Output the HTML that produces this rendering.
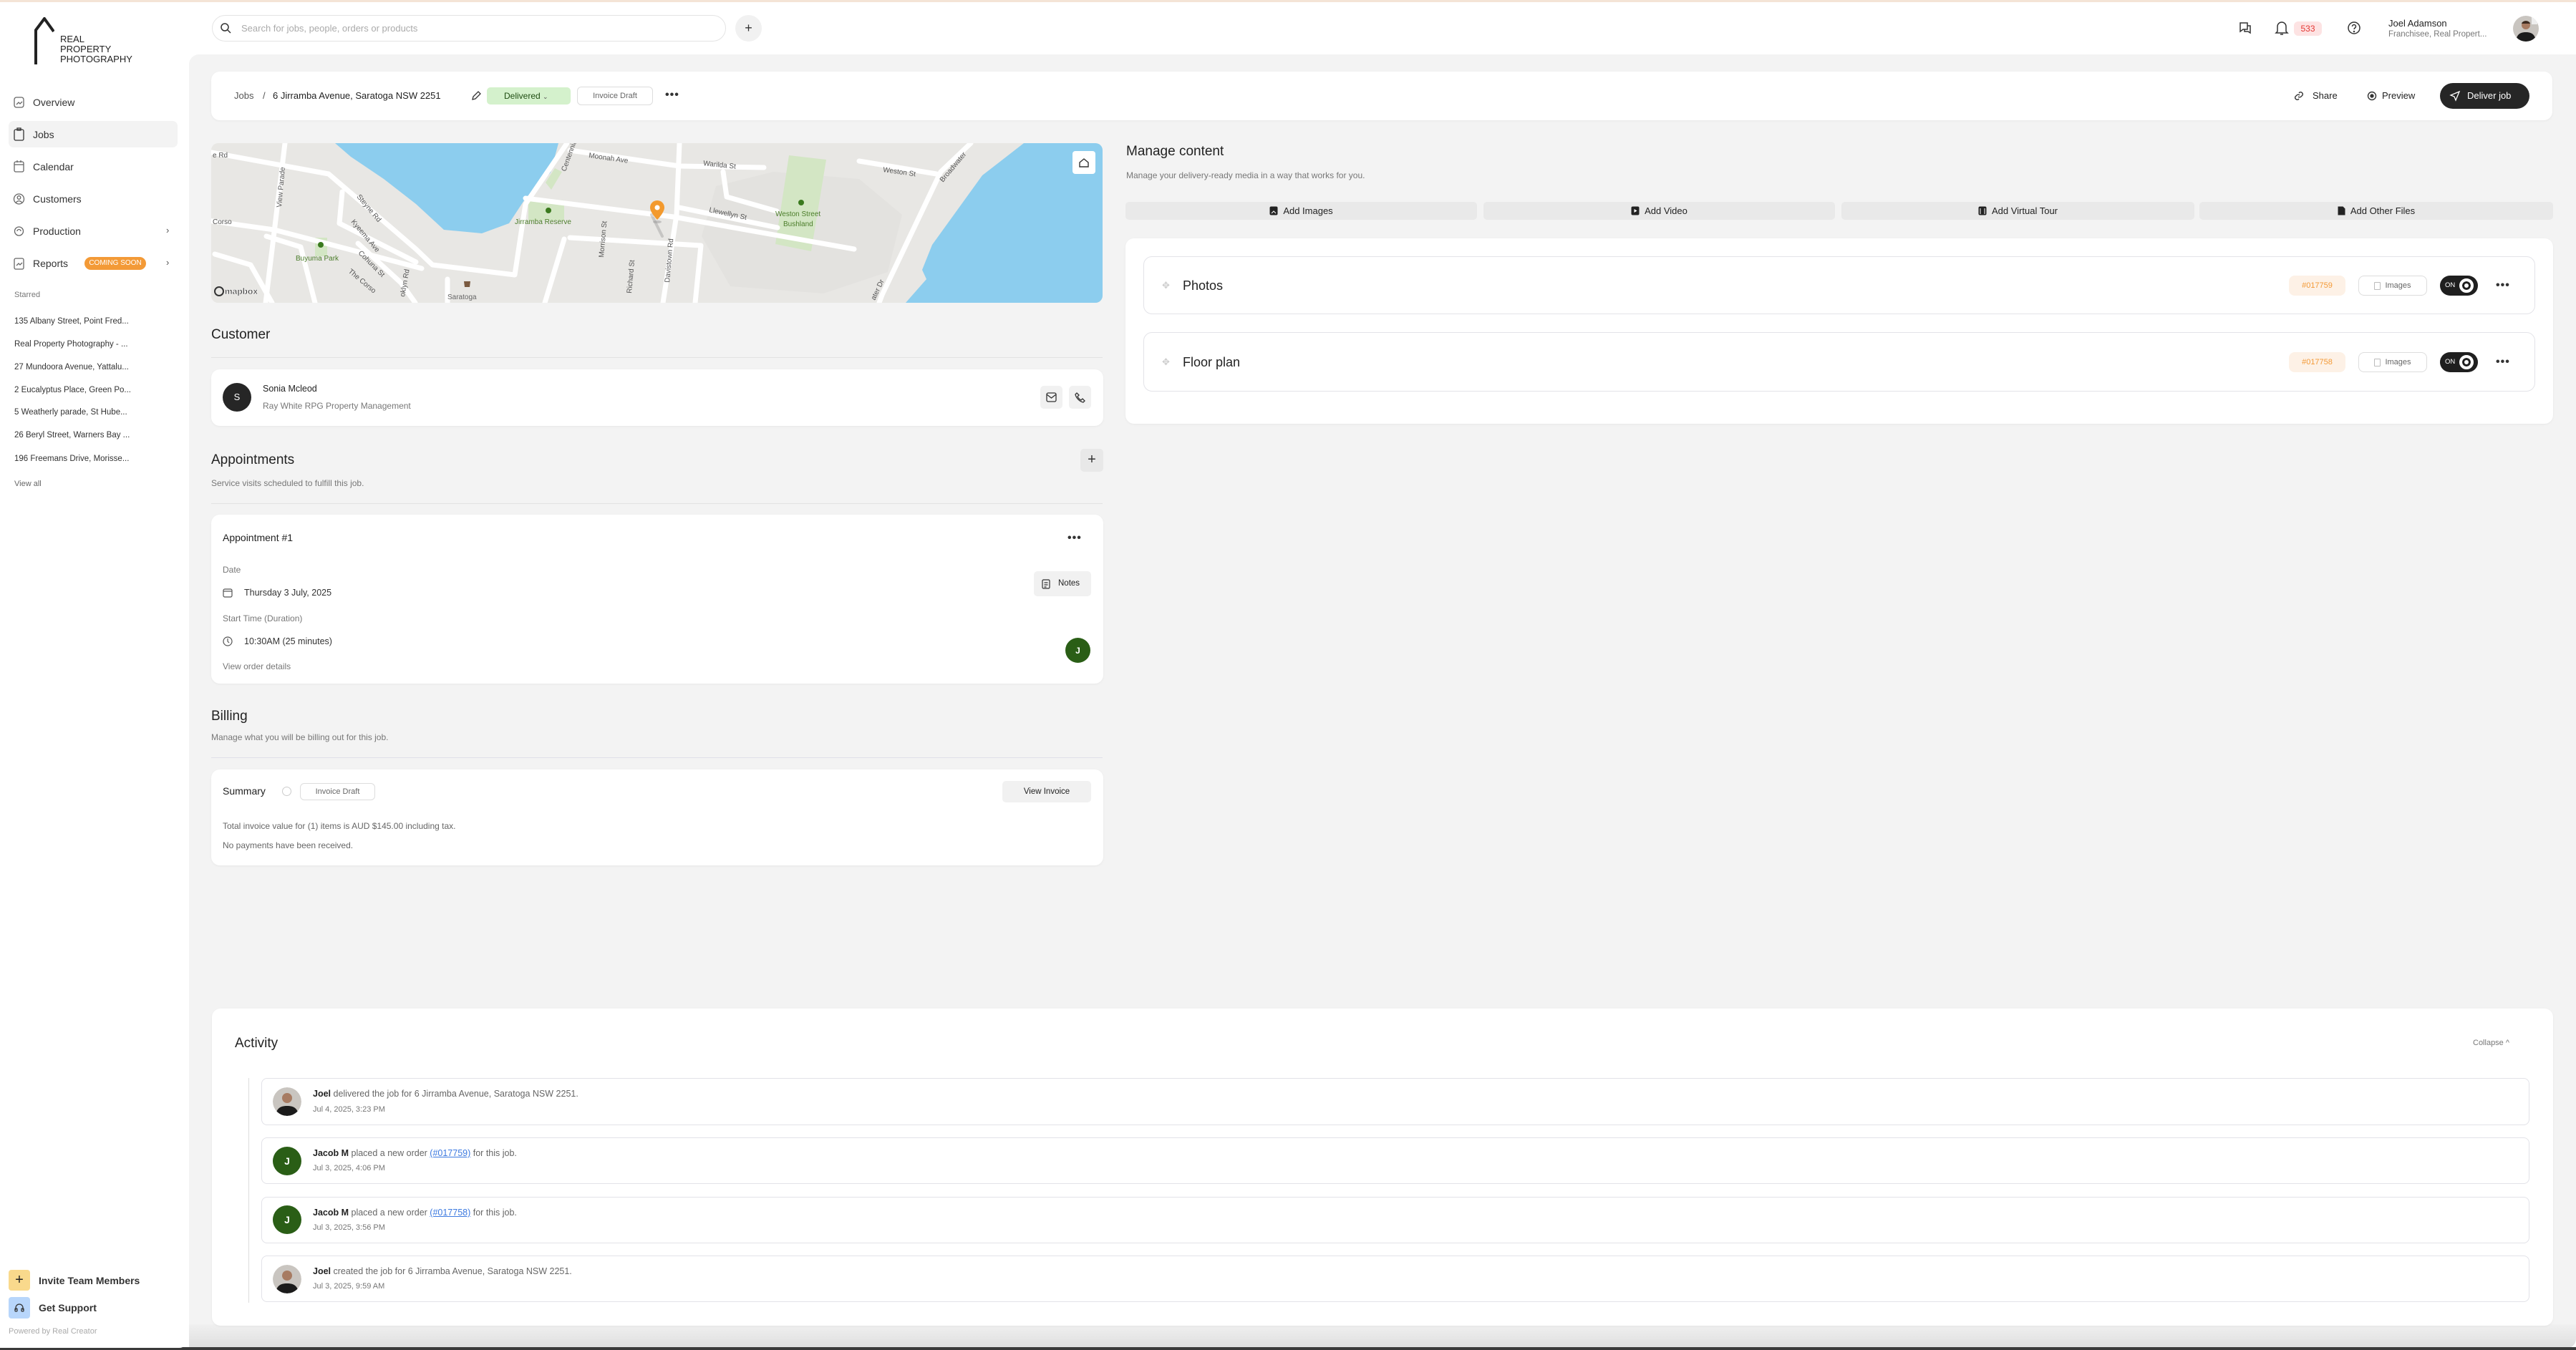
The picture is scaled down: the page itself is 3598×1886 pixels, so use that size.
<!DOCTYPE html>
<html><head><meta charset="utf-8">
<style>
*{box-sizing:border-box;margin:0;padding:0}
body{width:3598px;height:1886px;position:relative;overflow:hidden;background:#fff;font-family:"Liberation Sans",Arial,sans-serif;color:#1f1f1f}
.a{position:absolute}
.t{position:absolute;white-space:nowrap;line-height:1}
.card{position:absolute;background:#fff;border-radius:12px;box-shadow:0 1px 3px rgba(0,0,0,.05)}
.gray{color:#777}
.nav{position:absolute;left:46px;font-size:14px;color:#333;transform:translateY(-50%)}
.star{position:absolute;left:20px;font-size:11.5px;color:#333;transform:translateY(-50%)}
.ic{position:absolute;width:14px;height:14px;border:1.5px solid #666;border-radius:3px}
.btn{position:absolute;background:#e9e9e9;border-radius:5px;font-size:13px;color:#222;display:flex;align-items:center;justify-content:center;gap:7px}
.pill{position:absolute;border:1px solid #ddd;border-radius:6px;font-size:11px;color:#666;display:flex;align-items:center;justify-content:center}
.row{position:absolute;left:1597px;width:1944px;height:81px;border:1.5px solid #e3e3e8;border-radius:12px;background:#fff}
.act{position:absolute;left:365px;width:3168px;border:1.5px solid #e2e2e8;border-radius:8px;background:#fff}
.av{position:absolute;width:40px;height:40px;border-radius:50%}
.jav{background:#2a5e16;color:#fff;font-size:14px;font-weight:bold;display:flex;align-items:center;justify-content:center}
.dots{position:absolute;font-size:16px;letter-spacing:1px;color:#333;font-weight:bold}
</style></head><body>
<!-- top line -->
<div class="a" style="left:0;top:0;width:3598px;height:3px;background:#f4e4d6"></div>
<!-- main gray -->
<div class="a" style="left:264px;top:76px;width:3334px;height:1808px;background:#f3f3f3;border-radius:14px 0 14px 0"></div>
<div class="a" style="left:264px;top:1850px;width:3334px;height:34px;background:linear-gradient(#f0f0f0,#dedede);border-radius:0 0 14px 0"></div>
<div class="a" style="left:0;top:1882px;width:3598px;height:4px;background:#3a3a3a"></div>
<div class="a" style="left:0;top:1740px;width:264px;height:143px;background:#fff;border-radius:0 0 14px 0"></div>

<!-- logo -->
<svg class="a" style="left:46px;top:24px" width="30" height="66" viewBox="0 0 30 66"><path d="M4 66 V18 L16 2 L29 20" fill="none" stroke="#222" stroke-width="4"/></svg>
<div class="t" style="left:84px;top:48px;font-size:13px;line-height:14px;color:#222;white-space:normal;width:120px">REAL<br>PROPERTY<br>PHOTOGRAPHY</div>

<!-- search -->
<div class="a" style="left:296px;top:21px;width:718px;height:37px;border:1.5px solid #e4e4e4;border-radius:19px"></div>
<svg class="a" style="left:307px;top:31px" width="16" height="16" viewBox="0 0 16 16"><circle cx="7" cy="7" r="5" fill="none" stroke="#333" stroke-width="1.5"/><path d="M11 11l4 4" stroke="#333" stroke-width="1.5"/></svg>
<div class="t" style="left:337px;top:33px;font-size:13px;color:#aaa">Search for jobs, people, orders or products</div>
<div class="a" style="left:1027px;top:21px;width:37px;height:37px;border-radius:50%;background:#f1f1f1;font-size:18px;text-align:center;line-height:36px;color:#333">+</div>

<!-- header right -->
<svg class="a" style="left:3126px;top:29px" width="20" height="20" viewBox="0 0 20 20" fill="none" stroke="#333" stroke-width="1.5"><path d="M3 3h10v9H7l-4 3z"/><path d="M13 7h4v10l-3-2h-5v-3"/></svg>
<svg class="a" style="left:3177px;top:28px" width="20" height="22" viewBox="0 0 20 22" fill="none" stroke="#333" stroke-width="1.5"><path d="M4 16V9a6 6 0 0112 0v7l2 2H2z"/><path d="M8 20h4"/></svg>
<div class="a" style="left:3204px;top:30px;width:39px;height:20px;border-radius:6px;background:#fde3e3;color:#e53935;font-size:12px;text-align:center;line-height:20px">533</div>
<svg class="a" style="left:3278px;top:29px" width="20" height="20" viewBox="0 0 20 20" fill="none" stroke="#333" stroke-width="1.5"><circle cx="10" cy="10" r="8"/><path d="M7.5 8a2.5 2.5 0 015 0c0 2-2.5 2-2.5 4"/><circle cx="10" cy="15" r=".5"/></svg>
<div class="t" style="left:3336px;top:26px;font-size:13px;color:#222">Joel Adamson</div>
<div class="t" style="left:3336px;top:43px;font-size:11.5px;color:#777">Franchisee, Real Propert...</div>
<svg class="a" style="left:3510px;top:22px" width="36" height="36" viewBox="0 0 36 36"><defs><clipPath id="c1"><circle cx="18" cy="18" r="18"/></clipPath></defs><g clip-path="url(#c1)"><rect width="36" height="36" fill="#c9c5c0"/><rect x="26" y="2" width="8" height="10" fill="#eee"/><path d="M4 36c1-10 6-13 14-13s13 3 14 13z" fill="#1b1b1b"/><circle cx="18" cy="13" r="6" fill="#a77b62"/><path d="M12 11c1-5 11-5 12 0" fill="#3b2a20"/></g></svg>

<!-- sidebar nav -->
<div class="a" style="left:12px;top:169px;width:236px;height:37px;background:#f3f3f3;border-radius:7px"></div>
<svg class="a" style="left:0;top:0" width="40" height="400" fill="none" stroke="#666" stroke-width="1.3">
<rect x="20" y="136" width="13" height="14" rx="3"/><path d="M23 146l3-3 2 2 3-3"/>
<rect x="20" y="181" width="13" height="15" rx="2" stroke="#333"/><path d="M24 179h5v3h-5z" stroke="#333"/>
<rect x="20" y="226" width="13" height="14" rx="2"/><path d="M20 230h13M24 224v3M29 224v3"/>
<circle cx="26.5" cy="278" r="7"/><circle cx="26.5" cy="276" r="2.3"/><path d="M22.5 283c2-3 6-3 8 0"/>
<circle cx="26.5" cy="323" r="6"/><path d="M24 323a2.5 2.5 0 015 0"/>
<rect x="20" y="361" width="13" height="15" rx="2"/><path d="M23 371l3-3 2 2 3-3"/>
</svg>
<div class="nav" style="top:143px">Overview</div>
<div class="nav" style="top:188px">Jobs</div>
<div class="nav" style="top:233px">Calendar</div>
<div class="nav" style="top:278px">Customers</div>
<div class="nav" style="top:323px">Production</div>
<div class="nav" style="top:368px">Reports</div>
<div class="t" style="left:118px;top:359px;width:86px;height:18px;border-radius:9px;background:#f39a37;color:#fff;font-size:10px;line-height:18px;text-align:center">COMING SOON</div>
<div class="t" style="left:232px;top:315px;font-size:13px;color:#555">›</div>
<div class="t" style="left:232px;top:360px;font-size:13px;color:#555">›</div>
<div class="star" style="top:412px;color:#777;font-size:11px">Starred</div>
<div class="star" style="top:449px">135 Albany Street, Point Fred...</div>
<div class="star" style="top:481px">Real Property Photography - ...</div>
<div class="star" style="top:513px">27 Mundoora Avenue, Yattalu...</div>
<div class="star" style="top:545px">2 Eucalyptus Place, Green Po...</div>
<div class="star" style="top:576px">5 Weatherly parade, St Hube...</div>
<div class="star" style="top:608px">26 Beryl Street, Warners Bay ...</div>
<div class="star" style="top:641px">196 Freemans Drive, Morisse...</div>
<div class="star" style="top:676px;color:#666;font-size:11px">View all</div>

<!-- sidebar bottom -->
<div class="a" style="left:12px;top:1774px;width:30px;height:29px;border-radius:4px;background:#f9d98c;text-align:center;line-height:29px;font-size:20px;color:#222">+</div>
<div class="t" style="left:54px;top:1782px;font-size:14px;font-weight:bold;color:#333">Invite Team Members</div>
<div class="a" style="left:12px;top:1812px;width:30px;height:30px;border-radius:4px;background:#b8d6fb"></div>
<svg class="a" style="left:19px;top:1819px" width="16" height="16" viewBox="0 0 16 16" fill="none" stroke="#333" stroke-width="1.3"><path d="M3 11V8a5 5 0 0110 0v3"/><rect x="2" y="9" width="3" height="4" rx="1"/><rect x="11" y="9" width="3" height="4" rx="1"/></svg>
<div class="t" style="left:54px;top:1820px;font-size:14px;font-weight:bold;color:#333">Get Support</div>
<div class="t" style="left:12px;top:1855px;font-size:11px;color:#aaa">Powered by Real Creator</div>

<!-- top job card -->
<div class="card" style="left:295px;top:100px;width:3270px;height:68px"></div>
<div class="t" style="left:327px;top:127px;font-size:13px;color:#555">Jobs</div>
<div class="t" style="left:367px;top:127px;font-size:13px;color:#555">/</div>
<div class="t" style="left:381px;top:127px;font-size:13px;color:#222">6 Jirramba Avenue, Saratoga NSW 2251</div>
<svg class="a" style="left:657px;top:126px" width="16" height="16" viewBox="0 0 16 16" fill="none" stroke="#333" stroke-width="1.3"><path d="M3 13l1-4 7-7 3 3-7 7z"/></svg>
<div class="a" style="left:680px;top:122px;width:117px;height:24px;border-radius:5px;background:#d4f1cc;font-size:12px;color:#1f4d12;line-height:24px;padding-left:24px">Delivered <span style="font-size:9px;color:#555">⌄</span></div>
<div class="pill" style="left:806px;top:121px;width:106px;height:26px">Invoice Draft</div>
<div class="dots" style="left:929px;top:124px">•••</div>
<svg class="a" style="left:3203px;top:126px" width="16" height="16" viewBox="0 0 16 16" fill="none" stroke="#333" stroke-width="1.4"><path d="M7 9a3 3 0 004 0l2-2a3 3 0 00-4-4l-1 1M9 7a3 3 0 00-4 0L3 9a3 3 0 004 4l1-1"/></svg>
<div class="t" style="left:3230px;top:127px;font-size:13px;color:#222">Share</div>
<svg class="a" style="left:3306px;top:127px" width="14" height="14" viewBox="0 0 14 14" fill="none" stroke="#333" stroke-width="1.4"><circle cx="7" cy="7" r="5.5"/><circle cx="7" cy="7" r="2" fill="#333"/></svg>
<div class="t" style="left:3327px;top:127px;font-size:13px;color:#222">Preview</div>
<div class="a" style="left:3408px;top:116px;width:125px;height:36px;border-radius:18px;background:#262626;color:#fff;font-size:13px;line-height:36px;padding-left:38px">Deliver job</div>
<svg class="a" style="left:3421px;top:126px" width="16" height="16" viewBox="0 0 16 16" fill="none" stroke="#fff" stroke-width="1.3"><path d="M14 2L2 7l5 2 2 5z"/></svg>

<!-- map -->
<div class="a" style="left:295px;top:200px;width:1245px;height:223px;border-radius:10px;overflow:hidden;background:#e8e7e4">
<svg width="1245" height="223" viewBox="295 200 1245 223">
<rect x="295" y="200" width="1245" height="223" fill="#e8e7e4"/>
<path d="M1000 260 L1080 240 L1200 250 L1260 300 L1240 380 L1150 410 L1020 400 L980 330Z" fill="#e3e2df"/>
<path d="M468 200 L780 200 L769 241 L734 277 L711 312 L673 326 L620 321 L581 285 L536 250 L490 219Z" fill="#8ccdee"/>
<path d="M1430 200 L1540 200 L1540 423 L1265 423 L1294 390 L1288 377 L1302 342 L1372 245Z" fill="#8ccdee"/>
<path d="M1102 217 L1154 223 L1133 351 L1083 341Z" fill="#d3e6c4"/>
<path d="M738 277 L788 280 L788 308 L738 308Z" fill="#d3e6c4"/>
<path d="M762 255 L775 235 L785 240 L770 265Z" fill="#d3e6c4"/>
<path d="M440 332 L457 332 L457 358 L440 358Z" fill="#d3e6c4"/>
<g fill="none" stroke="#fff" stroke-width="7" stroke-linecap="round" stroke-linejoin="round">
<path d="M290 212 L459 243 L581 348 L604 370 L719 384 L734 285 L792 200"/>
<path d="M734 277 L941 303 L1193 348"/>
<path d="M949 200 L945 300 L926 423"/>
<path d="M796 210 L949 232 L1067 234"/>
<path d="M398 200 L371 423"/>
<path d="M290 308 L383 321 L589 375"/>
<path d="M478 268 L474 312 L581 366"/>
<path d="M796 332 L979 343 L971 423"/>
<path d="M788 334 L761 423"/>
<path d="M1356 200 L1314 240 L1232 412 L1228 423"/>
<path d="M1200 225 L1308 243"/>
<path d="M949 290 L1086 318"/>
<path d="M1010 240 L1015 275 L1085 295"/>
<path d="M625 390 L625 423" />
<path d="M372 330 L420 345 L440 423"/>
<path d="M300 355 L350 370 L380 423"/>
<path d="M500 340 L560 395 L580 423"/>
</g>
<path d="M910 300 L925 330" stroke="#888" stroke-width="4" stroke-linecap="round" opacity=".35"/>
<g font-family="Liberation Sans,sans-serif" font-size="10" fill="#555">
<text x="297" y="220">e Rd</text>
<text x="297" y="313">Corso</text>
<text x="822" y="220" transform="rotate(8 822 220)">Moonah Ave</text>
<text x="982" y="231" transform="rotate(6 982 231)">Warilda St</text>
<text x="1233" y="240" transform="rotate(8 1233 240)">Weston St</text>
<text x="990" y="296" transform="rotate(12 990 296)">Llewellyn St</text>
<text x="498" y="275" transform="rotate(50 498 275)">Steyne Rd</text>
<text x="490" y="310" transform="rotate(50 490 310)">Kyeema Ave</text>
<text x="500" y="354" transform="rotate(45 500 354)">Cohuna St</text>
<text x="486" y="380" transform="rotate(40 486 380)">The Corso</text>
<text x="393" y="290" transform="rotate(-85 393 290)">View Parade</text>
<text x="843" y="360" transform="rotate(-85 843 360)">Morrison St</text>
<text x="882" y="410" transform="rotate(-85 882 410)">Richard St</text>
<text x="935" y="395" transform="rotate(-85 935 395)">Davistown Rd</text>
<text x="790" y="240" transform="rotate(-70 790 240)">Centennial</text>
<text x="1317" y="255" transform="rotate(-50 1317 255)">Broadwater</text>
<text x="1222" y="420" transform="rotate(-65 1222 420)">ater Dr</text>
<text x="565" y="415" transform="rotate(-80 565 415)">oklyn Rd</text>
</g>
<g font-family="Liberation Sans,sans-serif" font-size="10" fill="#4b7d2a">
<text x="719" y="313">Jirramba Reserve</text><text x="413" y="364">Buyuma Park</text>
<text x="1083" y="302">Weston Street</text><text x="1094" y="316">Bushland</text>
</g>
<text x="625" y="418" font-family="Liberation Sans,sans-serif" font-size="10" fill="#666">Saratoga</text>
<g fill="#3a7a1e"><circle cx="766" cy="294" r="4"/><circle cx="448" cy="342" r="4"/><circle cx="1119" cy="283" r="4"/></g>
<path d="M648 393h9l-1 8h-7z" fill="#7a5a40"/>
<path d="M918 280 a10 10 0 0 1 10 10 c0 7-10 17-10 17 s-10-10-10-17 a10 10 0 0 1 10-10z" fill="#f39a2e"/>
<circle cx="918" cy="290" r="3.5" fill="#fff"/>
<ellipse cx="918" cy="310" rx="6" ry="2" fill="#999" opacity=".5"/>
<rect x="1498" y="211" width="32" height="32" rx="4" fill="#fff"/>
<path d="M1508 233 v-6 l6-5 6 5 v6z" fill="none" stroke="#333" stroke-width="1.4"/>
<circle cx="306" cy="407" r="6" fill="none" stroke="#333" stroke-width="2"/>
<text x="314" y="411" font-family="Liberation Sans,sans-serif" font-size="12" fill="#333" font-weight="bold" stroke="#fff" stroke-width=".5">mapbox</text>
</svg></div>

<!-- customer -->
<div class="t" style="left:295px;top:458px;font-size:19px;color:#222">Customer</div>
<div class="a" style="left:295px;top:499px;width:1245px;height:1px;background:#e2e2e2"></div>
<div class="card" style="left:295px;top:516px;width:1246px;height:79px"></div>
<div class="av" style="left:311px;top:535px;background:#262626;color:#fff;font-size:13px;text-align:center;line-height:40px">S</div>
<div class="t" style="left:367px;top:537px;font-size:12.5px;color:#222">Sonia Mcleod</div>
<div class="t" style="left:367px;top:561px;font-size:12px;color:#777">Ray White RPG Property Management</div>
<div class="a" style="left:1453px;top:539px;width:31px;height:32px;border-radius:5px;background:#f1f1f1"></div>
<svg class="a" style="left:1461px;top:548px" width="15" height="14" viewBox="0 0 15 14" fill="none" stroke="#333" stroke-width="1.3"><rect x="1" y="1" width="13" height="12" rx="2"/><path d="M1 3l6.5 5L14 3"/></svg>
<div class="a" style="left:1493px;top:539px;width:31px;height:32px;border-radius:5px;background:#f1f1f1"></div>
<svg class="a" style="left:1501px;top:548px" width="15" height="15" viewBox="0 0 15 15" fill="none" stroke="#333" stroke-width="1.3"><path d="M3 1l3 3-2 2c1 2 3 4 5 5l2-2 3 3-2 2C7 13 2 8 1 3z"/></svg>

<!-- appointments -->
<div class="t" style="left:295px;top:633px;font-size:19px;color:#222">Appointments</div>
<div class="t" style="left:295px;top:669px;font-size:12px;color:#777">Service visits scheduled to fulfill this job.</div>
<div class="a" style="left:1509px;top:627px;width:32px;height:32px;border-radius:5px;background:#e8e8e8;text-align:center;line-height:31px;font-size:20px;color:#333">+</div>
<div class="a" style="left:295px;top:703px;width:1245px;height:1px;background:#e2e2e2"></div>
<div class="card" style="left:295px;top:719px;width:1246px;height:236px"></div>
<div class="t" style="left:311px;top:744px;font-size:14px;color:#222">Appointment #1</div>
<div class="dots" style="left:1491px;top:743px">•••</div>
<div class="t" style="left:311px;top:790px;font-size:12px;color:#777">Date</div>
<svg class="a" style="left:311px;top:821px" width="14" height="14" viewBox="0 0 14 14" fill="none" stroke="#555" stroke-width="1.2"><rect x="1" y="2" width="12" height="11" rx="2"/><path d="M1 5h12"/></svg>
<div class="t" style="left:341px;top:822px;font-size:12.5px;color:#333">Thursday 3 July, 2025</div>
<div class="t" style="left:311px;top:858px;font-size:12px;color:#777">Start Time (Duration)</div>
<svg class="a" style="left:311px;top:889px" width="14" height="14" viewBox="0 0 14 14" fill="none" stroke="#555" stroke-width="1.2"><circle cx="7" cy="7" r="6"/><path d="M7 3v4l2 2"/></svg>
<div class="t" style="left:341px;top:890px;font-size:12.5px;color:#333">10:30AM (25 minutes)</div>
<div class="t" style="left:311px;top:925px;font-size:12px;color:#777">View order details</div>
<div class="a" style="left:1444px;top:798px;width:80px;height:35px;border-radius:5px;background:#f1f1f1"></div>
<svg class="a" style="left:1455px;top:809px" width="12" height="14" viewBox="0 0 12 14" fill="none" stroke="#333" stroke-width="1.2"><rect x="1" y="1" width="10" height="12" rx="1.5"/><path d="M3.5 5h5M3.5 8h5M3.5 11h3"/></svg>
<div class="t" style="left:1478px;top:810px;font-size:11.5px;color:#222">Notes</div>
<div class="av jav" style="left:1488px;top:891px;width:35px;height:35px;font-size:12px">J</div>

<!-- billing -->
<div class="t" style="left:295px;top:991px;font-size:19px;color:#222">Billing</div>
<div class="t" style="left:295px;top:1024px;font-size:12px;color:#777">Manage what you will be billing out for this job.</div>
<div class="a" style="left:295px;top:1058px;width:1245px;height:1px;background:#e0e0e8"></div>
<div class="card" style="left:295px;top:1075px;width:1246px;height:134px"></div>
<div class="t" style="left:311px;top:1098px;font-size:14px;color:#222">Summary</div>
<div class="a" style="left:394px;top:1099px;width:13px;height:13px;border-radius:50%;border:1px solid #ccc"></div>
<div class="pill" style="left:419px;top:1094px;width:105px;height:24px">Invoice Draft</div>
<div class="a" style="left:1400px;top:1091px;width:124px;height:30px;border-radius:5px;background:#f1f1f1;font-size:11.5px;color:#222;text-align:center;line-height:30px">View Invoice</div>
<div class="t" style="left:311px;top:1148px;font-size:12px;color:#666">Total invoice value for (1) items is AUD $145.00 including tax.</div>
<div class="t" style="left:311px;top:1175px;font-size:12px;color:#666">No payments have been received.</div>

<!-- manage content -->
<div class="t" style="left:1573px;top:202px;font-size:19px;color:#222">Manage content</div>
<div class="t" style="left:1573px;top:239px;font-size:12px;color:#777">Manage your delivery-ready media in a way that works for you.</div>
<div class="btn" style="left:1572px;top:282px;width:491px;height:25px"><svg width="12" height="13"><rect x=".5" y=".5" width="11" height="12" rx="2" fill="#222"/><path d="M3 10l3-3 3 3" stroke="#fff" fill="none"/></svg>Add Images</div>
<div class="btn" style="left:2072px;top:282px;width:491px;height:25px"><svg width="12" height="13"><rect x=".5" y=".5" width="11" height="12" rx="2" fill="#222"/><path d="M4.5 4v5l4-2.5z" fill="#fff"/></svg>Add Video</div>
<div class="btn" style="left:2572px;top:282px;width:493px;height:25px"><svg width="12" height="13"><rect x=".5" y=".5" width="11" height="12" rx="2" fill="#222"/><path d="M3 3v8M9 3v8" stroke="#fff"/></svg>Add Virtual Tour</div>
<div class="btn" style="left:3072px;top:282px;width:494px;height:25px"><svg width="11" height="13"><path d="M.5 .5h7l3 3v9h-10z" fill="#222"/></svg>Add Other Files</div>

<div class="card" style="left:1572px;top:333px;width:1994px;height:259px"></div>
<div class="row" style="top:358px"></div>
<div class="row" style="top:464px;height:83px"></div>
<div class="t" style="left:1623px;top:392px;font-size:13px;color:#ccc">✥</div>
<div class="t" style="left:1652px;top:390px;font-size:18px;color:#222">Photos</div>
<div class="t" style="left:1623px;top:499px;font-size:13px;color:#ccc">✥</div>
<div class="t" style="left:1652px;top:497px;font-size:18px;color:#222">Floor plan</div>

<div class="a" style="left:3197px;top:385px;width:79px;height:28px;border-radius:8px;background:#fdf1e6;color:#f39a37;font-size:11px;text-align:center;line-height:28px">#017759</div>
<div class="pill" style="left:3294px;top:385px;width:96px;height:28px;border-radius:8px;gap:6px"><span style="width:9px;height:11px;border:1px solid #bbb;border-radius:1px;display:inline-block"></span>Images</div>
<div class="a" style="left:3408px;top:385px;width:53px;height:28px;border-radius:14px;background:#1f1f1f;color:#fff;font-size:9.5px;line-height:28px;padding-left:7px">ON</div>
<div class="a" style="left:3435px;top:389px;width:20px;height:20px;border-radius:50%;background:#fff;border:4px solid #fff;box-shadow:inset 0 0 0 3px #1f1f1f"></div>
<div class="dots" style="left:3486px;top:390px">•••</div>

<div class="a" style="left:3197px;top:492px;width:79px;height:28px;border-radius:8px;background:#fdf1e6;color:#f39a37;font-size:11px;text-align:center;line-height:28px">#017758</div>
<div class="pill" style="left:3294px;top:492px;width:96px;height:28px;border-radius:8px;gap:6px"><span style="width:9px;height:11px;border:1px solid #bbb;border-radius:1px;display:inline-block"></span>Images</div>
<div class="a" style="left:3408px;top:492px;width:53px;height:28px;border-radius:14px;background:#1f1f1f;color:#fff;font-size:9.5px;line-height:28px;padding-left:7px">ON</div>
<div class="a" style="left:3435px;top:496px;width:20px;height:20px;border-radius:50%;background:#fff;border:4px solid #fff;box-shadow:inset 0 0 0 3px #1f1f1f"></div>
<div class="dots" style="left:3486px;top:497px">•••</div>

<!-- activity -->
<div class="card" style="left:296px;top:1409px;width:3270px;height:443px"></div>
<div class="t" style="left:328px;top:1448px;font-size:19px;color:#222">Activity</div>
<div class="t" style="left:3454px;top:1452px;font-size:11px;color:#777">Collapse ^</div>
<div class="a" style="left:347px;top:1506px;width:1px;height:314px;background:#ddd"></div>

<div class="act" style="top:1506px;height:66px"></div>
<svg class="av" style="left:381px;top:1519px" viewBox="0 0 40 40"><defs><clipPath id="c2"><circle cx="20" cy="20" r="20"/></clipPath></defs><g clip-path="url(#c2)"><rect width="40" height="40" fill="#c9c5c0"/><path d="M4 40c1-11 7-14 16-14s15 3 16 14z" fill="#1b1b1b"/><circle cx="20" cy="15" r="7" fill="#a77b62"/></g></svg>
<div class="t" style="left:437px;top:1522px;font-size:12.5px;color:#666"><b style="color:#222">Joel</b> delivered the job for 6 Jirramba Avenue, Saratoga NSW 2251.</div>
<div class="t" style="left:437px;top:1545px;font-size:11px;color:#777">Jul 4, 2025, 3:23 PM</div>

<div class="act" style="top:1589px;height:65px"></div>
<div class="av jav" style="left:381px;top:1602px">J</div>
<div class="t" style="left:437px;top:1605px;font-size:12.5px;color:#666"><b style="color:#222">Jacob M</b> placed a new order <span style="color:#3d7ae0;text-decoration:underline">(#017759)</span> for this job.</div>
<div class="t" style="left:437px;top:1627px;font-size:11px;color:#777">Jul 3, 2025, 4:06 PM</div>

<div class="act" style="top:1672px;height:65px"></div>
<div class="av jav" style="left:381px;top:1684px">J</div>
<div class="t" style="left:437px;top:1688px;font-size:12.5px;color:#666"><b style="color:#222">Jacob M</b> placed a new order <span style="color:#3d7ae0;text-decoration:underline">(#017758)</span> for this job.</div>
<div class="t" style="left:437px;top:1710px;font-size:11px;color:#777">Jul 3, 2025, 3:56 PM</div>

<div class="act" style="top:1754px;height:65px"></div>
<svg class="av" style="left:381px;top:1767px" viewBox="0 0 40 40"><defs><clipPath id="c3"><circle cx="20" cy="20" r="20"/></clipPath></defs><g clip-path="url(#c3)"><rect width="40" height="40" fill="#c9c5c0"/><path d="M4 40c1-11 7-14 16-14s15 3 16 14z" fill="#1b1b1b"/><circle cx="20" cy="15" r="7" fill="#a77b62"/></g></svg>
<div class="t" style="left:437px;top:1770px;font-size:12.5px;color:#666"><b style="color:#222">Joel</b> created the job for 6 Jirramba Avenue, Saratoga NSW 2251.</div>
<div class="t" style="left:437px;top:1792px;font-size:11px;color:#777">Jul 3, 2025, 9:59 AM</div>
</body></html>
